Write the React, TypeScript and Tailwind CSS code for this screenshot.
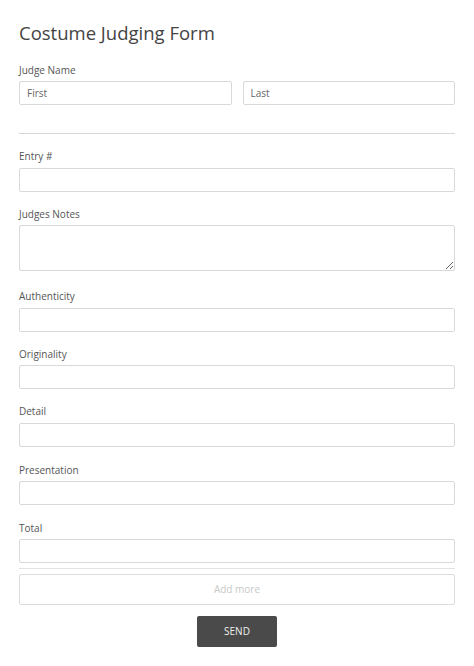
import React from 'react';

// top margin of each label, then gap between label and field (taken from the reference)
const FIELDS: { label: string; multiline?: boolean; mt: string; gap: string }[] = [
    { label: 'Entry #', mt: 'mt-[14px]', gap: 'mt-[4px]' },
    { label: 'Judges Notes', multiline: true, mt: 'mt-[14px]', gap: 'mt-[3px]' },
    { label: 'Authenticity', mt: 'mt-[17px]', gap: 'mt-[4px]' },
    { label: 'Originality', mt: 'mt-[14px]', gap: 'mt-[3px]' },
    { label: 'Detail', mt: 'mt-[14px]', gap: 'mt-[4px]' },
    { label: 'Presentation', mt: 'mt-[15px]', gap: 'mt-[3px]' },
    { label: 'Total', mt: 'mt-[15px]', gap: 'mt-[3px]' },
];

const inputClass =
    'block w-full h-[24px] rounded-[2px] border border-[#d9d9d9] bg-white px-[7px] text-[10px] text-[#555] placeholder:text-[#666] outline-none';

const App: React.FC = () => {
    return (
        <div className="min-h-[666px] bg-white px-[19px] pt-[20px] pb-4" style={{ fontFamily: '"Open Sans", "Liberation Sans", sans-serif' }}>
            <h1 className="text-[18.5px] leading-[26px] font-normal text-[#444]">Costume Judging Form</h1>

            <label className="mt-[16px] block text-[10px] leading-4 text-[#555]">Judge Name</label>
            <div className="mt-[3px] flex gap-[11px]">
                <input className={inputClass} placeholder="First" />
                <input className={inputClass} placeholder="Last" />
            </div>

            <div className="mt-[28px] h-px bg-[#d6d6d6]" />

            {FIELDS.map(({ label, multiline, mt, gap }) => (
                <div key={label} className={mt}>
                    <label className="block text-[10px] leading-4 text-[#555]">{label}</label>
                    {multiline ? (
                        <textarea className={`${gap} block h-[46px] w-full rounded-[2px] border border-[#d9d9d9] bg-white px-[7px] text-[10px] outline-none`} />
                    ) : (
                        <input className={`${gap} ${inputClass}`} />
                    )}
                </div>
            ))}

            <div className="mt-[5px] h-px bg-[#e2e2e2]" />

            <button className="mt-[5px] flex h-[31px] w-full items-center justify-center rounded-[2px] border border-[#dcdcdc] bg-white text-[10px] text-[#c8c8c8]">
                Add more
            </button>

            <div className="mt-[11px] flex justify-center">
                <button className="h-[31px] w-[80px] rounded-[2px] bg-[#4a4a4a] text-[10px] text-[#eee]">SEND</button>
            </div>
        </div>
    );
};

export default App;
